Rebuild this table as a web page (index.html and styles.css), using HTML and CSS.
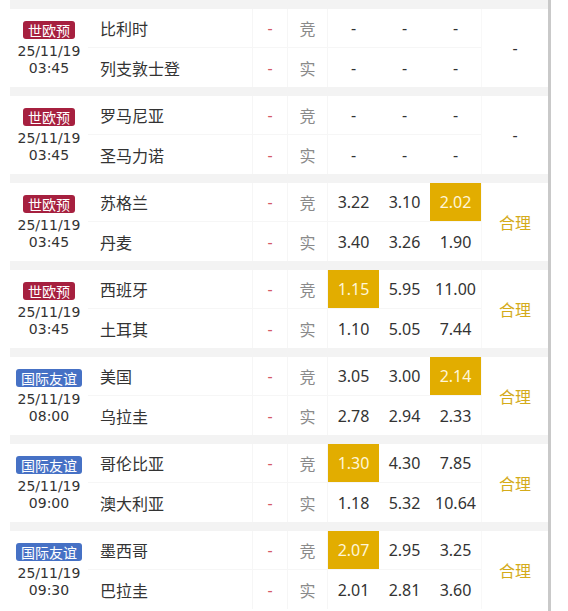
FILE: index.html
```html
<!DOCTYPE html>
<html lang="zh-CN">
<head>
<meta charset="utf-8">
<title>赛事赔率</title>
<link rel="stylesheet" href="styles.css">
</head>
<body>
<div class="board">
  <div class="sep"></div>
  <div class="match">
    <div class="info"><span class="badge red">世欧预</span><span class="date">25/11/19</span><span class="time">03:45</span></div>
    <div class="team r1">比利时</div><div class="dash r1">-</div><div class="kind r1">竞</div><div class="odd r1">-</div><div class="odd r1">-</div><div class="odd r1">-</div>
    <div class="verdict plain">-</div>
    <div class="team r2">列支敦士登</div><div class="dash r2">-</div><div class="kind r2">实</div><div class="odd r2">-</div><div class="odd r2">-</div><div class="odd r2">-</div>
  </div>
  <div class="sep"></div>
  <div class="match">
    <div class="info"><span class="badge red">世欧预</span><span class="date">25/11/19</span><span class="time">03:45</span></div>
    <div class="team r1">罗马尼亚</div><div class="dash r1">-</div><div class="kind r1">竞</div><div class="odd r1">-</div><div class="odd r1">-</div><div class="odd r1">-</div>
    <div class="verdict plain">-</div>
    <div class="team r2">圣马力诺</div><div class="dash r2">-</div><div class="kind r2">实</div><div class="odd r2">-</div><div class="odd r2">-</div><div class="odd r2">-</div>
  </div>
  <div class="sep"></div>
  <div class="match">
    <div class="info"><span class="badge red">世欧预</span><span class="date">25/11/19</span><span class="time">03:45</span></div>
    <div class="team r1">苏格兰</div><div class="dash r1">-</div><div class="kind r1">竞</div><div class="odd r1">3.22</div><div class="odd r1">3.10</div><div class="odd r1 hot">2.02</div>
    <div class="verdict">合理</div>
    <div class="team r2">丹麦</div><div class="dash r2">-</div><div class="kind r2">实</div><div class="odd r2">3.40</div><div class="odd r2">3.26</div><div class="odd r2">1.90</div>
  </div>
  <div class="sep"></div>
  <div class="match">
    <div class="info"><span class="badge red">世欧预</span><span class="date">25/11/19</span><span class="time">03:45</span></div>
    <div class="team r1">西班牙</div><div class="dash r1">-</div><div class="kind r1">竞</div><div class="odd r1 hot">1.15</div><div class="odd r1">5.95</div><div class="odd r1">11.00</div>
    <div class="verdict">合理</div>
    <div class="team r2">土耳其</div><div class="dash r2">-</div><div class="kind r2">实</div><div class="odd r2">1.10</div><div class="odd r2">5.05</div><div class="odd r2">7.44</div>
  </div>
  <div class="sep"></div>
  <div class="match">
    <div class="info"><span class="badge blue">国际友谊</span><span class="date">25/11/19</span><span class="time">08:00</span></div>
    <div class="team r1">美国</div><div class="dash r1">-</div><div class="kind r1">竞</div><div class="odd r1">3.05</div><div class="odd r1">3.00</div><div class="odd r1 hot">2.14</div>
    <div class="verdict">合理</div>
    <div class="team r2">乌拉圭</div><div class="dash r2">-</div><div class="kind r2">实</div><div class="odd r2">2.78</div><div class="odd r2">2.94</div><div class="odd r2">2.33</div>
  </div>
  <div class="sep"></div>
  <div class="match">
    <div class="info"><span class="badge blue">国际友谊</span><span class="date">25/11/19</span><span class="time">09:00</span></div>
    <div class="team r1">哥伦比亚</div><div class="dash r1">-</div><div class="kind r1">竞</div><div class="odd r1 hot">1.30</div><div class="odd r1">4.30</div><div class="odd r1">7.85</div>
    <div class="verdict">合理</div>
    <div class="team r2">澳大利亚</div><div class="dash r2">-</div><div class="kind r2">实</div><div class="odd r2">1.18</div><div class="odd r2">5.32</div><div class="odd r2">10.64</div>
  </div>
  <div class="sep"></div>
  <div class="match">
    <div class="info"><span class="badge blue">国际友谊</span><span class="date">25/11/19</span><span class="time">09:30</span></div>
    <div class="team r1">墨西哥</div><div class="dash r1">-</div><div class="kind r1">竞</div><div class="odd r1 hot">2.07</div><div class="odd r1">2.95</div><div class="odd r1">3.25</div>
    <div class="verdict">合理</div>
    <div class="team r2">巴拉圭</div><div class="dash r2">-</div><div class="kind r2">实</div><div class="odd r2">2.01</div><div class="odd r2">2.81</div><div class="odd r2">3.60</div>
  </div>
</div>
</body>
</html>
```

FILE: styles.css
```css
html, body {
  margin: 0;
  padding: 0;
  background: #ffffff;
}
body {
  font-family: "Noto Sans", "Noto Sans CJK SC", sans-serif;
  color: #333333;
  overflow: hidden;
}
.board {
  margin-left: 10px;
  width: 538px;
  border-right: 3px solid #c9c9c9;
  min-height: 611px;
}
.sep {
  height: 9px;
  background: #f3f3f3;
}
.match {
  display: grid;
  grid-template-columns: 78px 164px 36px 40px 51px 51px 51px 67px;
  grid-template-rows: 39px 39px;
  background: #ffffff;
}
.info {
  grid-row: 1 / 3;
  grid-column: 1;
  display: flex;
  flex-direction: column;
  align-items: center;
  padding-top: 12px;
}
.badge {
  height: 18px;
  line-height: 18px;
  padding: 0 5px;
  border-radius: 3px;
  font-size: 14px;
  color: #ffffff;
  font-family: "Noto Sans CJK SC", sans-serif;
  margin-bottom: 4px;
}
.badge.red { background: #a6203f; }
.badge.blue { background: #4671c5; }
.date, .time {
  font-family: "DejaVu Sans", sans-serif;
  font-size: 14px;
  line-height: 17px;
  color: #333333;
}
.team, .dash, .kind, .odd {
  display: flex;
  align-items: center;
  font-size: 16px;
}
.r1 { border-bottom: 1px solid #f6f6f6; }
.team {
  grid-column: 2;
  padding-left: 12px;
  font-family: "Noto Sans CJK SC", sans-serif;
}
.dash {
  justify-content: center;
  color: #d45a66;
  border-left: 1px solid #f6f6f6;
  border-right: 1px solid #f6f6f6;
}
.kind {
  justify-content: center;
  color: #8a8a8a;
  font-family: "Noto Sans CJK SC", sans-serif;
  border-right: 1px solid #f6f6f6;
}
.odd {
  justify-content: center;
  color: #333333;
}
.odd.hot {
  background: #e2ad00;
  color: #fff6d8;
}
.verdict {
  grid-row: 1 / 3;
  grid-column: 8;
  display: flex;
  align-items: center;
  justify-content: center;
  font-size: 16px;
  color: #d4ab1a;
  font-family: "Noto Sans CJK SC", sans-serif;
  border-left: 1px solid #f8f8f8;
}
.verdict.plain {
  color: #333333;
  font-family: "Noto Sans", sans-serif;
}
```
